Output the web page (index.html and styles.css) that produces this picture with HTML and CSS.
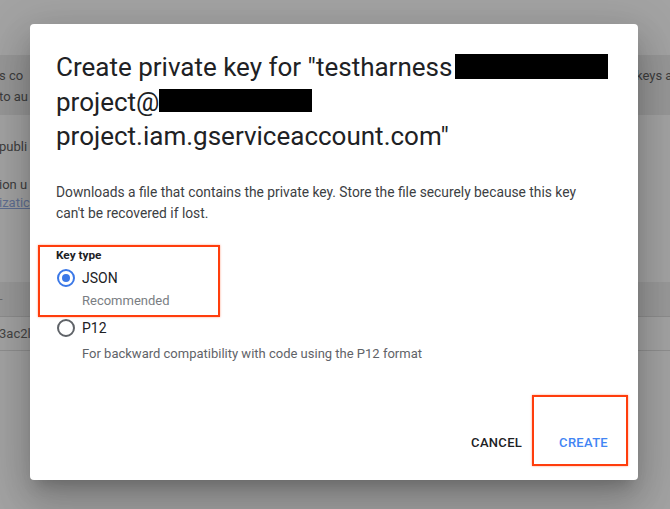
FILE: index.html
```html
<!DOCTYPE html>
<html>
<head>
<meta charset="utf-8">
<link rel="stylesheet" href="styles.css">
</head>
<body>
<div class="page">
  <div class="page-top"></div>
  <div class="page-band">
    <div class="band-line"><span class="frag-left">s co</span><span class="frag-right">keys a</span></div>
    <div class="band-line"><span class="frag-left">to au</span></div>
  </div>
  <div class="page-text first"><span class="frag-left">publi</span></div>
  <div class="page-text gap"><span class="frag-left">ion u</span></div>
  <div class="page-text"><span class="frag-left link">izatic</span></div>
  <div class="page-table-head"><span class="frag-left">-</span></div>
  <div class="page-table-row"><span class="frag-left">3ac2l</span></div>
</div>

<div class="dialog">
  <h1 class="title">
    <span class="title-line">Create private key for "testharness<span class="redact redact-a"></span></span>
    <span class="title-line">project@<span class="redact redact-b"></span></span>
    <span class="title-line">project.iam.gserviceaccount.com"</span>
  </h1>
  <p class="desc">Downloads a file that contains the private key. Store the file securely because this key<br>can't be recovered if lost.</p>

  <div class="highlight key-box">
    <div class="key-label">Key type</div>
    <div class="option">
      <span class="radio checked"></span>
      <span class="option-label">JSON</span>
    </div>
    <div class="option-hint">Recommended</div>
  </div>
  <div class="option p12">
    <span class="radio"></span>
    <span class="option-label">P12</span>
  </div>
  <div class="option-hint p12-hint">For backward compatibility with code using the P12 format</div>

  <div class="actions">
    <span class="btn cancel">CANCEL</span>
    <span class="btn create highlight">CREATE</span>
  </div>
</div>
</body>
</html>
```
FILE: styles.css
```css
html, body {
  margin: 0;
  padding: 0;
}
body {
  width: 670px;
  height: 509px;
  overflow: hidden;
  background: #a3a3a3;
  font-family: Roboto, "Liberation Sans", Arial, sans-serif;
  position: relative;
}
.page {
  color: #3d3d3d;
  font-size: 13px;
}
.page-top {
  height: 55px;
}
.page-band {
  height: 60px;
  background: #979797;
  padding-top: 10px;
  box-sizing: border-box;
}
.band-line {
  height: 21px;
  line-height: 21px;
  position: relative;
}
.frag-left {
  display: inline-block;
  margin-left: -1px;
}
.frag-right {
  position: absolute;
  left: 636px;
  top: 0;
  white-space: nowrap;
}
.page-text {
  height: 18px;
  line-height: 18px;
}
.page-text.first {
  margin-top: 23px;
}
.page-text.gap {
  margin-top: 20px;
}
.link {
  color: #5f6f92;
  text-decoration: underline;
}
.page-table-head {
  margin-top: 70px;
  height: 34px;
  background: #999999;
  border-bottom: 1px solid #8d8d8d;
  line-height: 34px;
  color: #6a6a6a;
}
.page-table-row {
  height: 33px;
  line-height: 33px;
  border-bottom: 1px solid #8f8f8f;
  color: #454545;
}

.dialog {
  position: absolute;
  left: 30px;
  top: 24px;
  width: 608px;
  height: 456px;
  box-sizing: border-box;
  background: #fff;
  border-radius: 4px;
  padding: 26px 10px 14px 26px;
  display: flex;
  flex-direction: column;
  box-shadow: 0 11px 15px -7px rgba(0,0,0,.2), 0 24px 38px 3px rgba(0,0,0,.14), 0 9px 46px 8px rgba(0,0,0,.12);
}
.title {
  margin: 0;
  font-size: 26px;
  font-weight: 400;
  line-height: 34.5px;
  color: #202124;
}
.title-line {
  display: block;
  white-space: nowrap;
}
.redact {
  display: inline-block;
  background: #000;
  vertical-align: top;
}
.redact-a {
  width: 153px;
  height: 25px;
  margin: 4px 0 0 3px;
}
.redact-b {
  width: 153px;
  height: 23px;
  margin-top: 4px;
}
.desc {
  margin: 28px 0 0 0;
  font-size: 13.8px;
  line-height: 21px;
  color: #3c4043;
}
.highlight {
  border: 2px solid #ff3d0c;
  box-shadow: 0 0 2px rgba(255, 61, 12, 0.5);
}
.key-box {
  margin: 21px 0 0 -18px;
  width: 182px;
  height: 72px;
  box-sizing: border-box;
  padding: 1px 0 0 16px;
}
.key-label {
  font-size: 11.8px;
  font-weight: 700;
  line-height: 14px;
  color: #202124;
}
.option {
  display: flex;
  align-items: center;
  height: 20px;
  margin-top: 6px;
}
.radio {
  width: 18px;
  height: 18px;
  box-sizing: border-box;
  border: 2px solid #5f6368;
  border-radius: 50%;
  display: flex;
  align-items: center;
  justify-content: center;
  margin-left: 1px;
}
.radio.checked {
  border-color: #3b78e7;
}
.radio.checked::after {
  content: "";
  width: 8px;
  height: 8px;
  border-radius: 50%;
  background: #3b78e7;
}
.option-label {
  margin-left: 7px;
  font-size: 14px;
  color: #202124;
}
.option-hint {
  margin: 5px 0 0 26px;
  font-size: 13px;
  line-height: 16px;
  color: #7a7e83;
}
.option.p12 {
  margin-top: 1px;
}
.p12-hint {
  margin-top: 8px;
  color: #5f6368;
}
.actions {
  margin-top: auto;
  display: flex;
  justify-content: flex-end;
  align-items: flex-end;
}
.btn {
  font-size: 13px;
  font-weight: 500;
  line-height: 16px;
  letter-spacing: 0.3px;
}
.cancel {
  color: #202124;
  margin-right: 10px;
  padding-bottom: 15px;
}
.create {
  color: #4285f4;
  padding: 38px 18px 13px 25px;
}
```
